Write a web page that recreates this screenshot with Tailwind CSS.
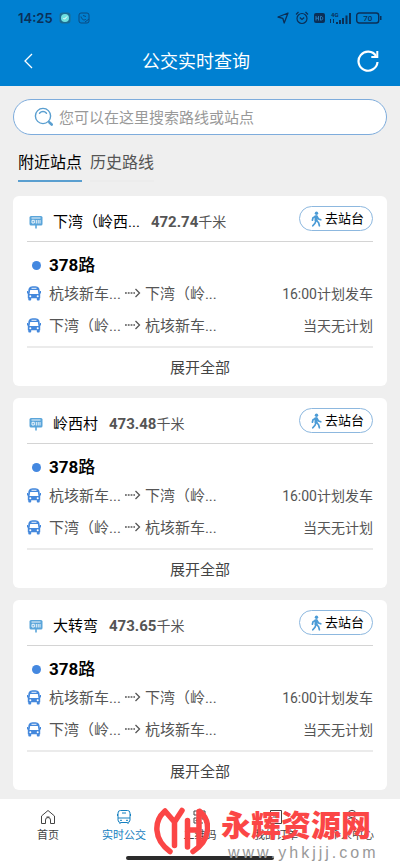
<!DOCTYPE html>
<html lang="zh-CN">
<head>
<meta charset="utf-8">
<meta name="viewport" content="width=device-width, initial-scale=1">
<title>公交实时查询</title>
<script src="https://cdn.jsdelivr.net/npm/@tailwindcss/browser@4"></script>
</head>
<body class="flex min-h-screen flex-col bg-[#efefef] font-[Roboto,'Noto_Sans_CJK_SC',sans-serif] text-[#555]">
<svg class="hidden">
  <symbol id="sign" viewBox="0 0 14 14"><rect x=".5" y="1" width="13" height="9.500" rx="1.500" fill="#5aa5da"/><path d="M7 10v3.500" stroke="#5aa5da" stroke-width="1.600"/><path d="M2.500 3h9M3 5.300h2.300v2.700H3zM7.300 5v3.500M9.200 5v3.500M11 5v3.500" stroke="#fff" stroke-width=".9" fill="none"/></symbol>
  <symbol id="bus" viewBox="0 0 14 15"><path d="M1.300 5C1.300 1.500 3 .3 7 .3S12.700 1.500 12.700 5L13.200 8v4.300H.8V8z" fill="#4488dc"/><path d="M1.300 12h2.900v1.700c0 .5-.3.800-.8.800H2.100c-.5 0-.8-.3-.8-.8zM9.800 12h2.900v1.700c0 .5-.3.800-.8.800h-1.300c-.5 0-.8-.3-.8-.8z" fill="#4488dc"/><path d="M.5 5v2.500M13.500 5v2.500" stroke="#4488dc"/><path d="M4.500 2.300h5" stroke="#fff" stroke-width=".9"/><path d="M3.200 4h7.600l.7 4h-9z" fill="#fff"/><circle cx="3.300" cy="10.300" r="1" fill="#fff"/><circle cx="10.700" cy="10.300" r="1" fill="#fff"/></symbol>
  <symbol id="walk" viewBox="0 0 12 16"><circle cx="6.500" cy="2.200" r="1.700" fill="#4b9bd6"/><path d="M6.300 5v5M6 5.300 3 6.800l-.6 2.400M7 5.500l1.500 2.500 2.300.8M6 9.500l-1 2.700-2.200 2.600M6.600 9.500l2 2.300.8 3" fill="none" stroke="#4b9bd6" stroke-width="1.700" stroke-linecap="round" stroke-linejoin="round"/><path d="M4.500 4.500h3V10h-3z" fill="#4b9bd6"/></symbol>
  <symbol id="arrow" viewBox="0 0 16 10"><path d="M0 5h10" stroke="#555" stroke-width="1.300" stroke-dasharray="1.800 1"/><path d="m10.500 1 4 4-4 4" fill="none" stroke="#555" stroke-width="1.300"/></symbol>
</svg>

<header class="bg-[#0080d1]">
  <div class="flex h-9 items-center px-[18px] text-[#0b2f57]">
    <span class="text-[13px] leading-4 font-semibold font-[Inter,sans-serif]">14:25</span>
    <svg class="ml-[6px] size-3" viewBox="0 0 12 12"><rect x=".5" y=".5" width="11" height="11" rx="3" fill="#1b6c93"/><circle cx="6" cy="6" r="4" fill="#6fe0e0"/><path d="m4.500 6 1 1.200L8 4.500" stroke="#fff" fill="none"/></svg>
    <svg class="ml-[7px] size-3" viewBox="0 0 12 12" fill="none" stroke="#0b4a80"><rect x="1" y="1" width="10" height="10" rx="2"/><path d="M3 4.500c1 4 4 4 5 2.500M5 3.500l3 1M7 10l4-3"/></svg>
    <div class="ml-auto flex items-center gap-[5px]">
      <svg class="size-3" viewBox="0 0 12 12" fill="none" stroke="currentColor" stroke-width="1.300" stroke-linejoin="round"><path d="M11 1 1 5l4.800 1.300L7.200 11z"/></svg>
      <svg class="ml-px size-[14px]" viewBox="0 0 14 14" fill="none" stroke="currentColor" stroke-width="1.200"><circle cx="7" cy="7.500" r="5"/><path d="M1 3.500 3.500 1M13 3.500 10.500 1M4.800 6.500 7 8.500l2.200-2"/></svg>
      <svg class="h-3 w-[11px]" viewBox="0 0 11 12"><rect y="1" width="11" height="10" rx="2" fill="currentColor"/><path d="M2 4v4.500M2 6.200h2.500M4.500 4v4.500M6.500 4.300v3.900c3 .3 3-4.200 0-3.900z" stroke="#2b83c4" fill="none" stroke-width=".9"/></svg>
      <svg class="h-[14px] w-[21px]" viewBox="0 0 21 14" fill="currentColor"><text x="1" y="5.500" font-size="6" font-weight="700" font-family="Roboto">4G</text><path d="M0 8h1v4H0zM3 8h1v4H3zM6 11h2v2H6zM9 9h2v4H9zM12 7h2v6h-2zM15.500 4.500h2V13h-2zM19 2h2v11h-2z"/></svg>
      <svg class="h-3 w-[26px]" viewBox="0 0 26 12"><rect x=".7" y="1" width="22" height="10" rx="2.500" fill="none" stroke="currentColor" stroke-width="1.400"/><path d="M24 4h1.500v4H24z" fill="currentColor"/><text x="11.700" y="9" text-anchor="middle" font-size="8" font-weight="500" font-family="Roboto" fill="currentColor">70</text></svg>
    </div>
  </div>
  <div class="flex h-[50px] items-center justify-between px-5 text-white">
    <button aria-label="返回" class="flex w-4"><svg class="size-4" viewBox="0 0 16 16" fill="none" stroke="currentColor" stroke-width="1.300"><path d="M12 1 5 8l7 7"/></svg></button>
    <h1 class="pt-[2px] text-lg leading-6">公交实时查询</h1>
    <button aria-label="刷新" class="flex w-6"><svg class="size-6" viewBox="0 0 24 24" fill="none" stroke="currentColor" stroke-width="2.200"><path d="M20 7A9.500 9.500 0 1 0 21.500 13"/><path d="M21.300 2v6h-6" stroke-width="2"/></svg></button>
  </div>
</header>

<main class="flex-1 px-[13px] pt-[13px] pb-2">
  <label class="flex h-9 items-center gap-[5px] rounded-full border border-[#7eacdc] bg-white pl-5">
    <svg class="size-5" viewBox="0 0 20 20" fill="none" stroke="#5a9fd0" stroke-width="1.400"><circle cx="9" cy="9" r="7.600"/><path d="M5.500 6.200C7.500 4 10.500 4 12.500 6.200M14.500 14.500l3.500 3.300" stroke-linecap="round"/><path d="m15.500 15.500 2.200 2" stroke-width="2.600" stroke-linecap="round"/></svg>
    <input type="search" aria-label="搜索路线或站点" placeholder="您可以在这里搜索路线或站点" class="min-w-0 flex-1 bg-transparent pt-px text-[15px] leading-5 outline-none placeholder:text-[#999]">
  </label>
  <div role="tablist" class="flex gap-2 px-[5px] pt-4 text-base leading-6">
    <button role="tab" aria-selected="true" class="border-b-2 border-[#5a9fd0] pb-[5px] text-black">附近站点</button>
    <button role="tab" aria-selected="false" class="border-b-2 border-[#ececec] pb-[5px]">历史路线</button>
  </div>
  <div id="stations" class="mt-[14px] flex flex-col gap-3"></div>
</main>

<nav class="relative bg-white">
  <div class="grid h-[67px] grid-cols-5 px-[10px] pt-[10px] text-[11px] leading-4 text-[#444]">
    <a href="#" class="flex flex-col items-center gap-[3px]"><svg class="size-4" viewBox="0 0 16 16" fill="none" stroke="currentColor"><path d="M1.500 7 8 1.500 14.500 7v7.500h-4V11a2.500 2.500 0 0 0-5 0v3.500h-4z" stroke-linejoin="round"/><path d="M6.500 8h3"/></svg>首页</a>
    <a href="#" class="flex flex-col items-center gap-[3px] text-[#1580c0]"><svg class="size-4" viewBox="0 0 16 16" fill="none" stroke="currentColor"><rect x="2" y="1.500" width="12" height="12" rx="2.500"/><path d="M2 9h12M4 11.300h2M10 11.300h2M4 13.500V15M12 13.500V15M6 4h4M1.500 5v2M14.500 5v2"/></svg>实时公交</a>
    <a href="#" class="flex flex-col items-center gap-[3px]"><svg class="size-4" viewBox="0 0 16 16" fill="none" stroke="currentColor"><path d="M2 2h4v4H2zM9 2h4v4H9zM2 9h5v5H2zM4 11h1v1H4zM9 9h2v2M13 9v5M9 14h2"/></svg>二维码</a>
    <a href="#" class="flex flex-col items-center gap-[3px]"><svg class="size-4" viewBox="0 0 16 16" fill="none" stroke="currentColor"><path d="M2.500 1.500h11v13h-11zM5 5h6M5 8h4"/></svg>我的订单</a>
    <a href="#" class="flex flex-col items-center gap-[3px]"><svg class="size-4" viewBox="0 0 16 16" fill="none" stroke="currentColor"><circle cx="8" cy="5" r="3.700"/><path d="M1.500 15c0-8 13-8 13 0"/></svg>个人中心</a>
  </div>
  <div class="absolute bottom-[6px] left-1/2 h-1 w-[148px] -translate-x-1/2 rounded-full bg-[#2b2b2b]"></div>
  <div class="pointer-events-none absolute top-[7px] left-[154px] flex">
    <svg class="h-[50px] w-[56px]" viewBox="0 0 56 50" fill="none" stroke="#fb4646" stroke-width="5.500" stroke-linecap="round"><path d="M10.500 5.500C0 15-1 33 16 45.500M11 5l9.500 11L28 4.500M20.500 17v22.500" stroke-linejoin="round"/><path d="M33.500 14.500V41M45 5.500v33.500M34 24h11"/><path d="M46 5.500C57 15 57 34 39 45.500"/></svg>
    <div class="flex flex-col pt-1 pl-[11px]">
      <span class="text-[30px] leading-8 font-black whitespace-nowrap text-[#fb4646]">永辉资源网</span>
      <span class="pt-px pl-[7px] text-base leading-5 tracking-[3px] text-[#999] font-['Liberation_Sans',sans-serif]">www.yhkjjj.com</span>
    </div>
  </div>
</nav>

<script>
const stations = [
  { name: '下湾（岭西...', distance: '472.74' },
  { name: '岭西村', distance: '473.48' },
  { name: '大转弯', distance: '473.65' },
];
const trip = (from, to, status) => `
  <li class="flex h-8 items-center text-[15px] leading-5">
    <svg class="mr-2 h-[15px] w-[14px]"><use href="#bus"/></svg>
    <span class="pt-px">${from}</span>
    <svg class="mx-1 h-[10px] w-4"><use href="#arrow"/></svg>
    <span class="pt-px">${to}</span>
    <span class="ml-auto pt-px text-sm leading-5">${status}</span>
  </li>`;
document.getElementById('stations').innerHTML = stations.map(s => `
  <section class="rounded-md bg-white px-[14px]">
    <div class="flex h-[46px] items-center border-b border-[#d4d4d4]">
      <svg class="mt-[6px] ml-[2px] size-[14px]"><use href="#sign"/></svg>
      <h2 class="mt-[6px] ml-[10px] text-[15px] leading-5 text-black">${s.name}</h2>
      <span class="mt-[6px] ml-[11px] text-sm leading-5"><b class="text-[15px]">${s.distance}</b>千米</span>
      <button class="ml-auto flex h-[25px] items-center gap-[3px] rounded-full border border-[#8db8df] pr-2 pl-[10px] text-[13px] leading-5 text-black"><svg class="h-4 w-3"><use href="#walk"/></svg>去站台</button>
    </div>
    <h3 class="flex items-center gap-2 pt-[11px] pl-[5px] text-[17px] leading-6 font-medium text-black"><span class="size-[9px] rounded-full bg-[#4488e0]"></span><span><b>378</b>路</span></h3>
    <ul class="border-b-2 border-[#ebebeb] pb-[5px]">
      ${trip('杭垓新车...', '下湾（岭...', '16:00计划发车')}
      ${trip('下湾（岭...', '杭垓新车...', '当天无计划')}
    </ul>
    <button class="block h-[38px] w-full pt-px text-[15px] leading-5 text-[#444]">展开全部</button>
  </section>`).join('');
</script>
</body>
</html>
